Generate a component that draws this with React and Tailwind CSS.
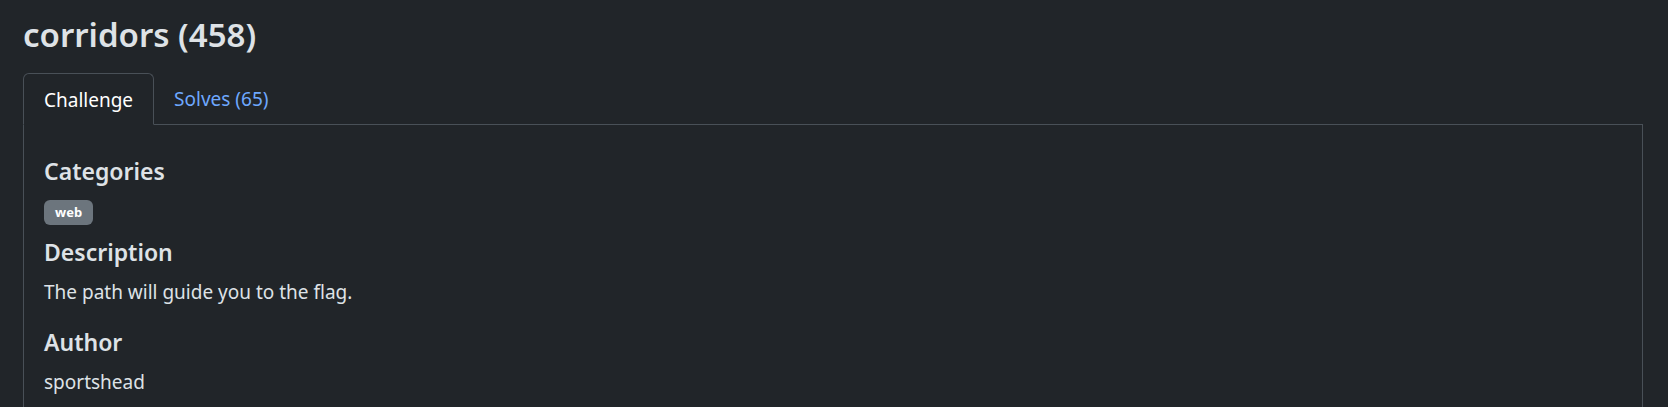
export default function App() {
  return (
    <div className="min-h-screen bg-[#212529] pl-[23px] pr-[25px] pt-[15px] font-['Noto_Sans',sans-serif] text-[#dee2e6]">
      <h2 className="m-0 text-[33px] font-semibold leading-[40px]">corridors (458)</h2>
      <ul className="mt-[18px] flex border-b border-[#495057]">
        <li className="-mb-px">
          <button className="h-[52px] rounded-t-[6px] border border-[#495057] border-b-[#212529] px-[20px] pt-[2px] text-[19px] text-white">
            Challenge
          </button>
        </li>
        <li>
          <a href="#" className="flex h-[51px] items-center px-[20px] pt-[2px] text-[19px] text-[#6ea8fe]">
            Solves (65)
          </a>
        </li>
      </ul>
      <div className="h-[300px] border-x border-[#495057] px-[20px] pt-[32px]">
        <h4 className="text-[23px] font-semibold leading-[28px]">Categories</h4>
        <div className="mt-[15px] flex">
          <span className="inline-flex h-[25px] items-center rounded-[6px] bg-[#6c757d] px-[11px] text-[13px] font-bold text-white">
            web
          </span>
        </div>
        <h4 className="mt-[13px] text-[23px] font-semibold leading-[28px]">Description</h4>
        <p className="mt-[12px] text-[19px] leading-[28px]">The path will guide you to the flag.</p>
        <h4 className="mt-[22px] text-[23px] font-semibold leading-[28px]">Author</h4>
        <p className="mt-[12px] text-[19px] leading-[28px]">sportshead</p>
      </div>
    </div>
  );
}
